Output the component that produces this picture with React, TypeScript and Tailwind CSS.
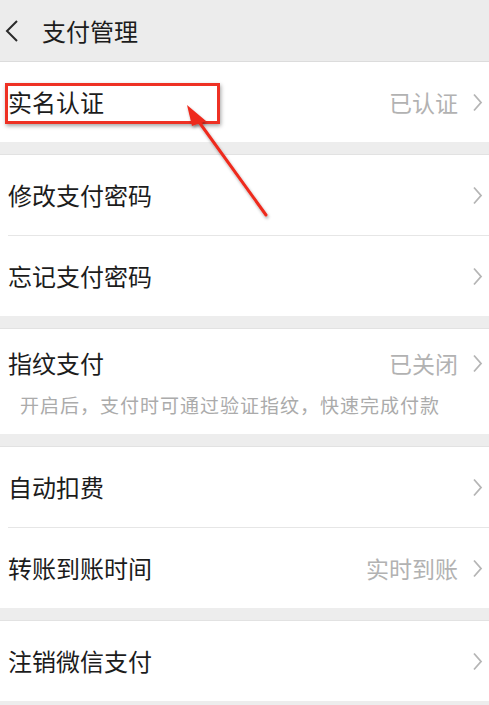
import React from "react";

const font = {
  fontFamily: '"Noto Sans CJK SC", "Noto Sans", sans-serif',
};

const Chevron = () => (
  <svg width="11" height="19" viewBox="0 0 11 19" className="shrink-0">
    <path d="M2 1.5 L9 9.5 L2 17.5" fill="none" stroke="#b5b5b5" strokeWidth="1.8" />
  </svg>
);

type RowProps = {
  title: string;
  value?: string;
  divider?: boolean;
  children?: React.ReactNode;
};

const Row = ({ title, value, divider, children }: RowProps) => (
  <div className="bg-white pl-2">
    <div className={"pr-[6px] " + (divider ? "border-b border-[#e6e6e6]" : "")}>
      <div className={(children ? "h-[68px]" : "h-20") + " flex items-center justify-between"}>
        <span className="text-[24px] text-[#1c1c1c]">{title}</span>
        <div className="flex items-center gap-[14px]">
          {value && <span className="text-[23px] text-[#b2b2b2]">{value}</span>}
          <Chevron />
        </div>
      </div>
      {children}
    </div>
  </div>
);

const Gap = () => <div className="h-[13px] bg-[#ededed] border-b border-[#e2e2e2]" />;

export default function App() {
  return (
    <div className="relative w-[489px] h-[705px] overflow-hidden bg-[#ededed]" style={font}>
      <header className="h-[62px] flex items-center bg-[#ececec] border-b border-[#dcdcdc]">
        <svg width="16" height="24" viewBox="0 0 16 24" className="ml-[4px]">
          <path d="M13 2 L3 12 L13 22" fill="none" stroke="#2a2a2a" strokeWidth="2" />
        </svg>
        <span className="ml-[22px] text-[24px] text-[#1c1c1c] leading-none">支付管理</span>
      </header>

      <Row title="实名认证" value="已认证" />
      <Gap />
      <Row title="修改支付密码" divider />
      <Row title="忘记支付密码" />
      <Gap />
      <Row title="指纹支付" value="已关闭">
        <div className="-mt-[2px] pb-[20px] pl-3 text-[19px] tracking-[1px] text-[#ababab] leading-none">
          开启后，支付时可通过验证指纹，快速完成付款
        </div>
      </Row>
      <Gap />
      <Row title="自动扣费" divider />
      <Row title="转账到账时间" value="实时到账" />
      <Gap />
      <Row title="注销微信支付" />

      {/* annotation overlay */}
      <div className="absolute left-[5px] top-[83px] w-[215px] h-[41px] border-[3px] border-[#ee3124] shadow-[1px_2px_4px_rgba(0,0,0,0.35)]" />
      <svg className="absolute left-0 top-0 pointer-events-none" width="489" height="705">
        <defs>
          <filter id="sh" x="-20%" y="-20%" width="140%" height="140%">
            <feDropShadow dx="1" dy="2" stdDeviation="1.5" floodColor="#000" floodOpacity="0.35" />
          </filter>
        </defs>
        <g filter="url(#sh)">
          <line x1="266" y1="215" x2="194" y2="115" stroke="#ee2a1e" strokeWidth="3" strokeLinecap="round" />
          <polygon points="187,105 206,121 192,126" fill="#ee2a1e" />
        </g>
      </svg>
    </div>
  );
}
